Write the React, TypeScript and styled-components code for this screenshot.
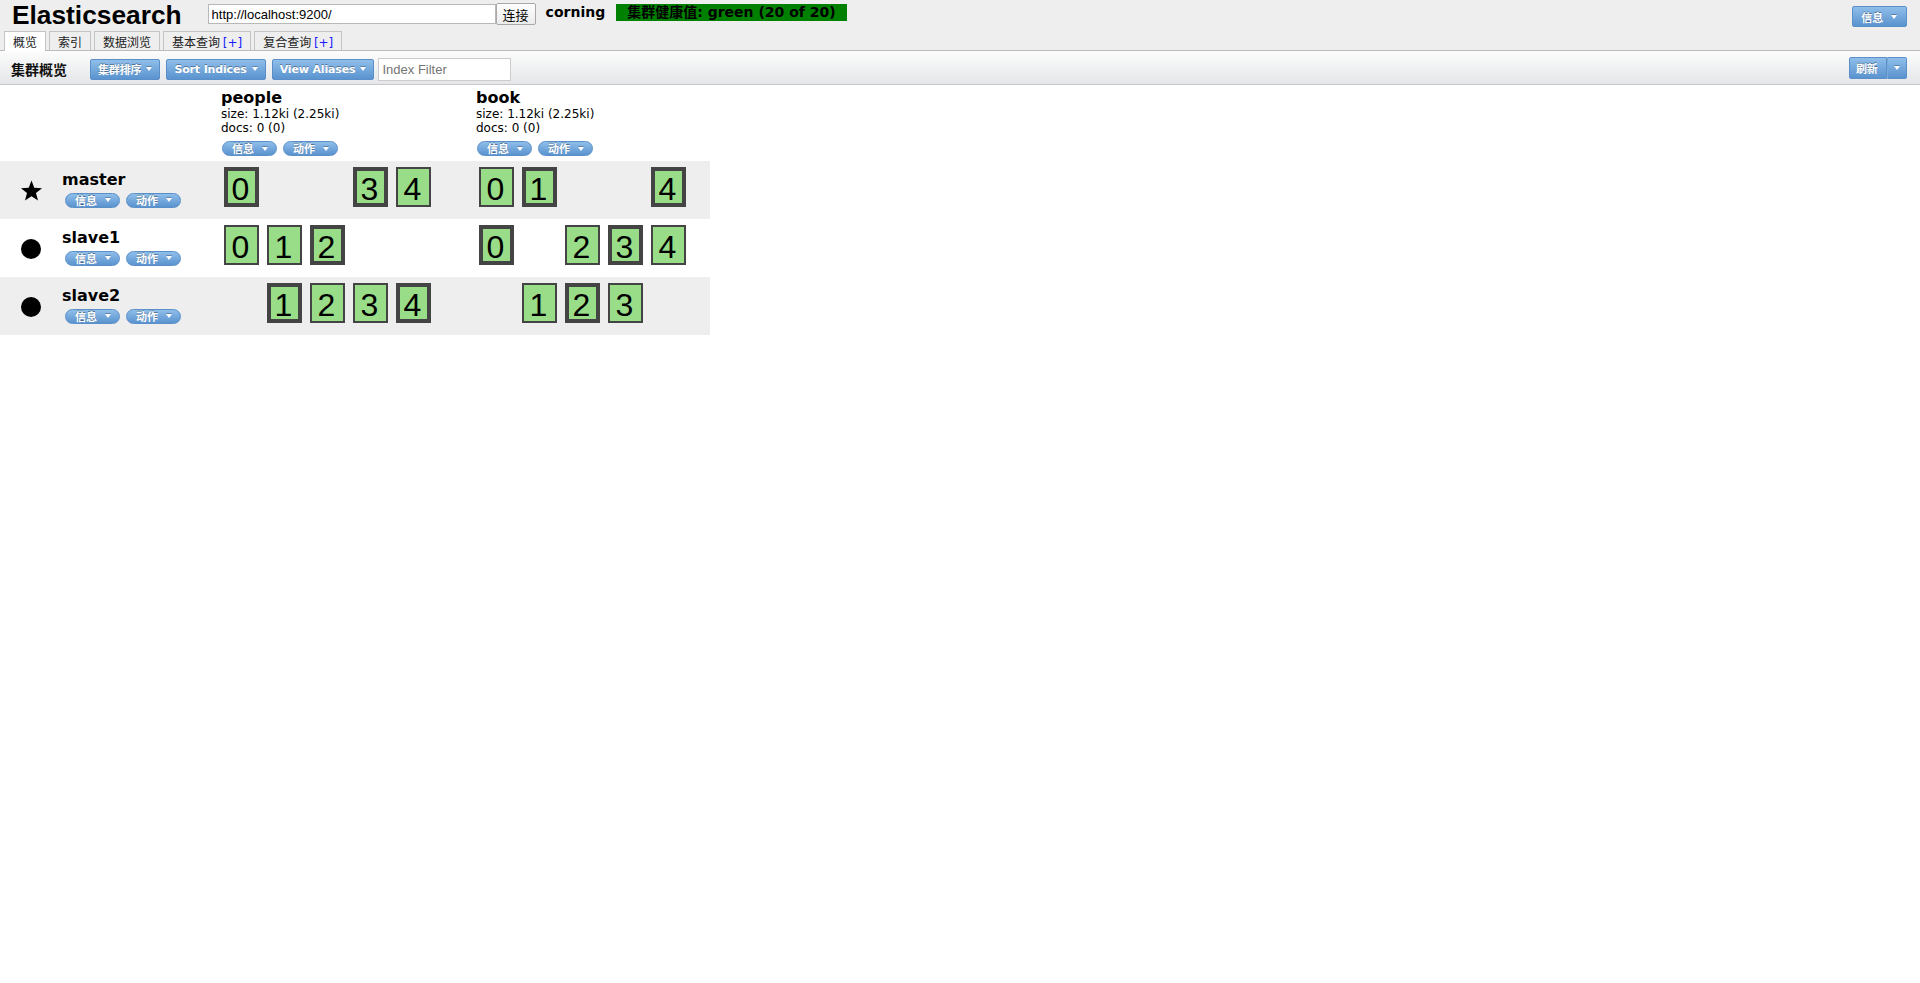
import React from "react";
import styled, { createGlobalStyle, css } from "styled-components";

const GlobalStyle = createGlobalStyle`
    html, body {
        margin: 0;
        padding: 0;
        background: #fff;
    }
    body {
        font-family: "DejaVu Sans", "Noto Sans CJK SC", sans-serif;
        font-size: 12px;
        color: #000;
    }
`;

const COLS = "62px 158px 255px 235px";

const blueFace = css`
    background: linear-gradient(#8fbeea, #5a93cf);
    border: 1px solid #5b8fc8;
    color: #fff;
    font-weight: bold;
    text-shadow: 0 -1px 0 rgba(0, 0, 0, 0.35);
    box-sizing: border-box;
    display: inline-flex;
    align-items: center;
    cursor: pointer;
`;

const Header = styled.div`
    height: 50px;
    background: #eee;
    border-bottom: 1px solid #bbb;
`;

const TopRow = styled.div`
    display: flex;
    align-items: flex-start;
    height: 31px;
    padding: 0 13px 0 12px;
`;

const Logo = styled.h1`
    margin: 0;
    padding-right: 26px;
    font-family: "Liberation Sans", Arial, sans-serif;
    font-size: 26.3px;
    line-height: 30px;
    font-weight: bold;
`;

const UrlInput = styled.input`
    box-sizing: border-box;
    margin: 4px 0 0;
    width: 288px;
    height: 20px;
    padding: 0 3px;
    border: 1px solid #b8b8b8;
    font-family: "Liberation Sans", Arial, sans-serif;
    font-size: 13px;
    color: #000;
    outline: none;
`;

const ConnectButton = styled.button`
    box-sizing: border-box;
    margin: 3px 0 0;
    width: 40px;
    height: 22px;
    padding: 0;
    border: 1px solid #a9a9a9;
    border-radius: 2px;
    background: linear-gradient(#fdfdfd, #ececec);
    font-family: "Noto Sans CJK SC", sans-serif;
    font-size: 13px;
    color: #000;
`;

const ClusterName = styled.span`
    margin: 4px 0 0 10px;
    font-size: 14px;
    font-weight: bold;
    line-height: 17px;
`;

const Health = styled.span`
    margin: 4px 0 0 11px;
    height: 17px;
    padding: 0 11px;
    background: #008000;
    color: #000;
    font-size: 14px;
    font-weight: bold;
    line-height: 17px;
`;

const Caret = styled.span<{ $w?: number }>`
    display: inline-block;
    width: 0;
    height: 0;
    border-left: ${(p) => (p.$w ?? 6) / 2}px solid transparent;
    border-right: ${(p) => (p.$w ?? 6) / 2}px solid transparent;
    border-top: 4px solid #fff;
    filter: drop-shadow(0 -1px 0 rgba(0, 0, 0, 0.25));
`;

const Button = styled.span`
    ${blueFace};
    height: 21px;
    padding: 0 7px;
    gap: 5px;
    border-radius: 2px;
    font-size: 11px;
    letter-spacing: -0.15px;
`;

const RightButton = styled(Button)`
    margin: 6px 0 0 auto;
    padding: 0 9px 0 8px;
    gap: 8px;
`;

const TabsRow = styled.div`
    display: flex;
    align-items: flex-start;
    gap: 3px;
    height: 19px;
    padding-left: 4px;
`;

const Tab = styled.div<{ $active?: boolean }>`
    box-sizing: border-box;
    height: ${(p) => (p.$active ? 20 : 19)}px;
    padding: 1px 8px 0;
    border: 1px solid #c4c4c4;
    border-bottom: none;
    background: ${(p) => (p.$active ? "#fff" : "#eee")};
    font-family: "Noto Sans CJK SC", sans-serif;
    font-size: 12px;
    line-height: 17px;
    color: #222;
    white-space: pre;
`;

const Plus = styled.span`
    color: #1a1aff;
    font-family: "DejaVu Sans", sans-serif;
`;

const Toolbar = styled.div`
    box-sizing: border-box;
    height: 34px;
    display: flex;
    align-items: center;
    gap: 6px;
    padding: 3px 13px 0 11px;
    background: linear-gradient(#fcfcfc, #e4e6e9);
    border-bottom: 1px solid #c8c8c8;
`;

const ToolbarTitle = styled.span`
    margin-right: 17px;
    font-family: "Noto Sans CJK SC", sans-serif;
    font-size: 14px;
    font-weight: bold;
    color: #111;
`;

const FilterInput = styled.input`
    box-sizing: border-box;
    margin-left: -2px;
    width: 133px;
    height: 23px;
    padding: 0 3px;
    border: 1px solid #ccc;
    font-family: "Liberation Sans", Arial, sans-serif;
    font-size: 13px;
    outline: none;
    &::placeholder {
        color: #757575;
    }
`;

const SplitGroup = styled.div`
    display: flex;
    margin: -3px 0 0 auto;
`;

const SplitMain = styled(Button)`
    height: 22px;
    width: 38px;
    padding: 0 0 0 6px;
    border-radius: 2px 0 0 2px;
`;

const SplitCaret = styled(Button)`
    height: 22px;
    width: 20px;
    justify-content: center;
    padding: 0;
    border-left-color: #7aa8d8;
    border-radius: 0 2px 2px 0;
`;

const Overview = styled.div`
    width: 710px;
`;

const HeadRow = styled.div`
    display: grid;
    grid-template-columns: ${COLS};
`;

const IndexHead = styled.div`
    padding: 4px 0 5px 1px;
`;

const IndexName = styled.div`
    font-size: 16px;
    font-weight: bold;
    line-height: 18px;
`;

const Meta = styled.div`
    font-size: 12px;
    line-height: 14px;
`;

const PillRow = styled.div<{ $top: number; $left: number }>`
    display: flex;
    gap: 6px;
    margin-top: ${(p) => p.$top}px;
    padding-left: ${(p) => p.$left}px;
`;

const Pill = styled.span`
    ${blueFace};
    height: 15px;
    padding: 0 8px 0 9px;
    gap: 8px;
    border-radius: 8px;
    font-family: "Noto Sans CJK SC", sans-serif;
    font-size: 11px;
    line-height: 13px;
`;

const NodeRow = styled.div<{ $alt?: boolean }>`
    display: grid;
    grid-template-columns: ${COLS};
    height: 58px;
    background: ${(p) => (p.$alt ? "#eee" : "#fff")};
`;

const IconCell = styled.div`
    display: flex;
    align-items: center;
    justify-content: center;
    padding-top: 2px;
`;

const NameCell = styled.div`
    display: flex;
    flex-direction: column;
    justify-content: center;
    padding-bottom: 2px;
`;

const NodeName = styled.div`
    font-size: 16px;
    font-weight: bold;
    line-height: 18px;
`;

const ShardCell = styled.div`
    display: flex;
    align-items: flex-start;
    padding-top: 2px;
`;

type ShardState = "primary" | "replica" | "empty";

const Shard = styled.div<{ $state: ShardState }>`
    box-sizing: border-box;
    flex: none;
    width: 35px;
    height: 40px;
    margin: 4px;
    padding-top: ${(p) => (p.$state === "primary" ? 2 : 4)}px;
    border: ${(p) => (p.$state === "primary" ? 4 : 2)}px solid
        ${(p) => (p.$state === "empty" ? "transparent" : "#444")};
    background: ${(p) => (p.$state === "empty" ? "transparent" : "#99dd88")};
    font-family: "Liberation Sans", Arial, sans-serif;
    font-size: 32px;
    line-height: 32px;
    text-align: center;
    text-indent: -2px;
    overflow: visible;
`;

const Star = () => (
    <svg width="23" height="22" viewBox="0 0 24 23">
        <path d="M12 0.5l2.9 7.6 8.1.4-6.3 5.1 2.1 7.9L12 17l-6.8 4.5 2.1-7.9L1 8.5l8.1-.4z" fill="#000" />
    </svg>
);

const Dot = () => (
    <svg width="20" height="20" viewBox="0 0 20 20">
        <circle cx="10" cy="10" r="10" fill="#000" />
    </svg>
);

const Menus = ({ top, left }: { top: number; left: number }) => (
    <PillRow $top={top} $left={left}>
        <Pill>信息<Caret $w={7} /></Pill>
        <Pill>动作<Caret $w={7} /></Pill>
    </PillRow>
);

// shards per node: [index][slot] -> P = primary, R = replica, - = none
const indices = ["people", "book"];

const nodes = [
    { name: "master", master: true, shards: ["P--PR", "RP--P"] },
    { name: "slave1", master: false, shards: ["RRP--", "P-RPR"] },
    { name: "slave2", master: false, shards: ["-PRRP", "-RPR-"] },
];

const stateOf = (c: string): ShardState => (c === "P" ? "primary" : c === "R" ? "replica" : "empty");

const App = () => {
    return (
        <>
            <GlobalStyle />
            <Header>
                <TopRow>
                    <Logo>Elasticsearch</Logo>
                    <UrlInput defaultValue="http://localhost:9200/" />
                    <ConnectButton>连接</ConnectButton>
                    <ClusterName>corning</ClusterName>
                    <Health>集群健康值: green (20 of 20)</Health>
                    <RightButton>信息<Caret /></RightButton>
                </TopRow>
                <TabsRow>
                    <Tab $active>概览</Tab>
                    <Tab>索引</Tab>
                    <Tab>数据浏览</Tab>
                    <Tab>基本查询 <Plus>[+]</Plus></Tab>
                    <Tab>复合查询 <Plus>[+]</Plus></Tab>
                </TabsRow>
            </Header>
            <Toolbar>
                <ToolbarTitle>集群概览</ToolbarTitle>
                <Button>集群排序<Caret /></Button>
                <Button>Sort Indices<Caret /></Button>
                <Button>View Aliases<Caret /></Button>
                <FilterInput placeholder="Index Filter" />
                <SplitGroup>
                    <SplitMain>刷新</SplitMain>
                    <SplitCaret><Caret /></SplitCaret>
                </SplitGroup>
            </Toolbar>
            <Overview>
                <HeadRow>
                    <div />
                    <div />
                    {indices.map((name) => (
                        <IndexHead key={name}>
                            <IndexName>{name}</IndexName>
                            <Meta>size: 1.12ki (2.25ki)</Meta>
                            <Meta>docs: 0 (0)</Meta>
                            <Menus top={6} left={1} />
                        </IndexHead>
                    ))}
                </HeadRow>
                {nodes.map((node, i) => (
                    <NodeRow key={node.name} $alt={i % 2 === 0}>
                        <IconCell>{node.master ? <Star /> : <Dot />}</IconCell>
                        <NameCell>
                            <NodeName>{node.name}</NodeName>
                            <Menus top={4} left={3} />
                        </NameCell>
                        {node.shards.map((row, j) => (
                            <ShardCell key={j}>
                                {row.split("").map((c, k) => (
                                    <Shard key={k} $state={stateOf(c)}>
                                        {c === "-" ? "" : k}
                                    </Shard>
                                ))}
                            </ShardCell>
                        ))}
                    </NodeRow>
                ))}
            </Overview>
        </>
    );
};

export default App;
